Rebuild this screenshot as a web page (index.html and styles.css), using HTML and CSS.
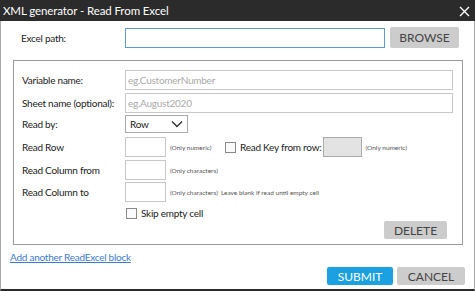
FILE: index.html
```html
<!DOCTYPE html>
<html lang="en">
<head>
    <meta charset="UTF-8">
    <title>XML generator - Read From Excel</title>
    <link rel="stylesheet" href="styles.css">
</head>
<body>
    <div class="window">
        <div class="titlebar">
            <span class="title">XML generator - Read From Excel</span>
            <span class="close">
                <svg width="11" height="11" viewBox="0 0 11 11"><path d="M1 1 L10 10 M10 1 L1 10" stroke="#fff" stroke-width="1.4" fill="none"/></svg>
            </span>
        </div>

        <div class="content">
            <div class="path-row">
                <label class="path-label">Excel path:</label>
                <input type="text" class="path-input">
                <button class="btn btn-grey browse">BROWSE</button>
            </div>

            <div class="group">
                <div class="row row-var">
                    <label class="lbl">Variable name:</label>
                    <input type="text" class="wide" placeholder="eg.CustomerNumber">
                </div>
                <div class="row row-sheet">
                    <label class="lbl">Sheet name (optional):</label>
                    <input type="text" class="wide" placeholder="eg.August2020">
                </div>
                <div class="row row-readby">
                    <label class="lbl">Read by:</label>
                    <div class="select">
                        <span>Row</span>
                        <svg width="12" height="8" viewBox="0 0 12 8"><path d="M1 1.5 L6 6.5 L11 1.5" stroke="#333" stroke-width="1.4" fill="none"/></svg>
                    </div>
                </div>
                <div class="row row-num">
                    <label class="lbl">Read Row</label>
                    <input type="text" class="small">
                    <span class="hint hint-num">(Only numeric)</span>
                    <span class="check"></span>
                    <span class="check-text">Read Key from row:</span>
                    <input type="text" class="small disabled" disabled>
                    <span class="hint">(Only numeric)</span>
                </div>
                <div class="row row-from">
                    <label class="lbl">Read Column from</label>
                    <input type="text" class="small">
                    <span class="hint">(Only characters)</span>
                </div>
                <div class="row row-to">
                    <label class="lbl">Read Column to</label>
                    <input type="text" class="small">
                    <span class="hint">(Only characters)</span>
                    <span class="hint hint-leave">Leave blank if read until empty cell</span>
                </div>
                <div class="row row-skip">
                    <span class="lbl"></span>
                    <span class="check"></span>
                    <span class="check-text">Skip empty cell</span>
                </div>
                <div class="delete-row">
                    <button class="btn btn-grey delete">DELETE</button>
                </div>
            </div>

            <a href="#" class="add-link">Add another ReadExcel block</a>

            <div class="footer">
                <button class="btn btn-blue">SUBMIT</button>
                <button class="btn btn-grey">CANCEL</button>
            </div>
        </div>
    </div>
</body>
</html>
```

FILE: styles.css
```css
html, body {
    margin: 0;
    padding: 0;
    background: #ffffff;
}

body {
    font-family: Lato, 'Noto Sans', sans-serif;
    font-size: 10px;
    letter-spacing: -0.25px;
    color: #222;
}

.window {
    width: 475px;
    height: 291px;
    box-sizing: border-box;
    border-left: 1px solid #a8a8a8;
    border-right: 1px solid #a8a8a8;
    border-bottom: 2px solid #2b2b2b;
    display: flex;
    flex-direction: column;
}

.titlebar {
    height: 21px;
    margin: 0 -1px;
    background: #2b2b2b;
    color: #ffffff;
    display: flex;
    align-items: center;
    justify-content: space-between;
    padding: 0 5px 0 3px;
    flex: none;
}

.title {
    font-size: 11.5px;
    letter-spacing: -0.1px;
}

.close {
    display: flex;
    margin-top: 2px;
}

.content {
    flex: 1;
    padding: 0 0 0 12px;
    display: flex;
    flex-direction: column;
}

/* top path row */
.path-row {
    display: flex;
    align-items: center;
    margin-top: 6px;
    height: 21px;
    flex: none;
}

.path-label {
    width: 112px;
    padding-left: 8px;
    box-sizing: border-box;
}

input {
    font-family: inherit;
    font-size: 10px;
    letter-spacing: -0.25px;
    box-sizing: border-box;
    margin: 0;
    outline: none;
    background: #fff;
}

.path-input {
    width: 260px;
    height: 20px;
    border: 1px solid #5b9bd5;
}

.btn {
    font-family: inherit;
    font-size: 12px;
    letter-spacing: 0;
    border: none;
    border-radius: 2px;
    padding: 0;
    cursor: pointer;
}

.btn-grey {
    background: #cccccc;
    color: #444;
}

.btn-blue {
    background: #1ba1e2;
    color: #fff;
}

.browse {
    width: 69px;
    height: 21px;
    margin-left: 5px;
}

/* group box */
.group {
    width: 450px;
    height: 185px;
    box-sizing: border-box;
    margin-top: 12px;
    border: 1px solid #9a9a9a;
    padding: 9px 9px 0 8px;
    flex: none;
}

.row {
    display: flex;
    align-items: center;
    white-space: nowrap;
}

.lbl {
    width: 103px;
    flex: none;
    color: #222;
}

.wide {
    flex: 1;
    height: 20px;
    border: 1px solid #c8c8c8;
    padding: 0 2px;
}

.wide::placeholder {
    color: #a9a9a9;
}

.row-sheet { margin-top: 3px; }
.row-readby { margin-top: 2px; }
.row-num { margin-top: 4px; }
.row-from { margin-top: 3px; }
.row-to { margin-top: 2px; }
.row-skip { margin-top: 5px; height: 12px; }

.select {
    width: 63px;
    height: 18px;
    box-sizing: border-box;
    border: 1px solid #aaa;
    display: flex;
    align-items: center;
    justify-content: space-between;
    padding: 0 4px 0 4px;
}

.small {
    width: 41px;
    height: 20px;
    border: 1px solid #c8c8c8;
}

.small.disabled {
    width: 39px;
    background: #e3e3e3;
    border-color: #aaa;
}

.hint {
    font-size: 6.5px;
    letter-spacing: 0;
    color: #555;
    margin-left: 4px;
}

.hint-num {
    width: 55px;
}

.hint-leave {
    margin-left: 3px;
}

.check {
    width: 11px;
    height: 11px;
    box-sizing: border-box;
    border: 1px solid #888;
    background: #fafafa;
    flex: none;
}

.row-skip .check {
    margin-left: 1px;
}

.check-text {
    margin-left: 4px;
    margin-right: 1px;
}

.delete-row {
    display: flex;
    justify-content: flex-end;
    margin-top: 2px;
    padding-right: 6px;
}

.delete {
    width: 63px;
    height: 18px;
}

.add-link {
    color: #3b7bd4;
    margin: 6px 0 0 -3px;
    align-self: flex-start;
}

.footer {
    display: flex;
    justify-content: flex-end;
    gap: 4px;
    margin-top: 4px;
    padding-right: 9px;
}

.footer .btn {
    height: 18px;
    font-size: 12px;
}

.btn-blue { width: 66px; }
.footer .btn-grey { width: 68px; }
```
